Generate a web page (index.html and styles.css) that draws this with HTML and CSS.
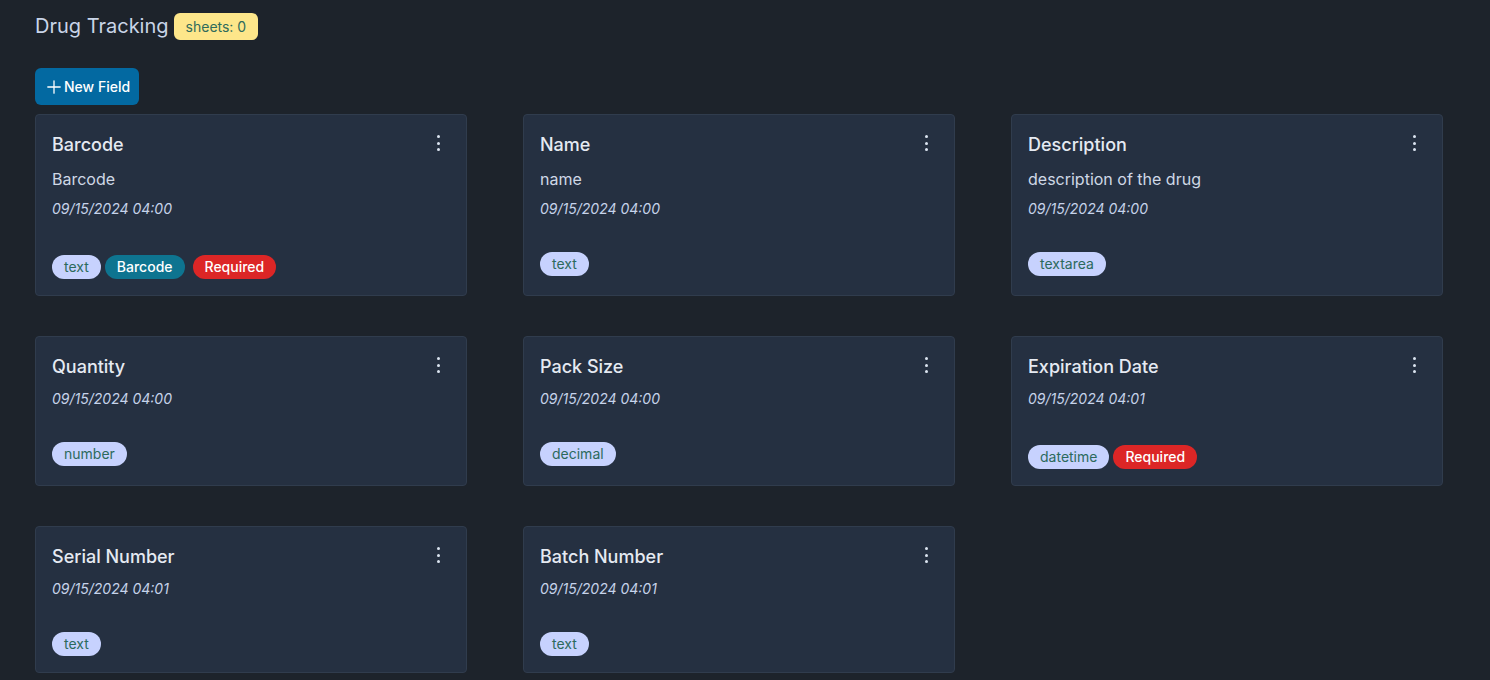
FILE: index.html
```html
<!DOCTYPE html>
<html lang="en">
<head>
<meta charset="utf-8">
<title>Drug Tracking</title>
<link rel="stylesheet" href="styles.css">
</head>
<body>
<main class="page">
  <header class="page-head">
    <h1 class="page-title">Drug Tracking</h1>
    <span class="sheet-count">sheets: 0</span>
  </header>
  <button class="new-btn" type="button">
    <svg class="plus" viewBox="0 0 14 14" width="14" height="14" fill="none" stroke="currentColor" stroke-width="1.3" stroke-linecap="round"><path d="M7 0.8v12.4M0.8 7h12.4"/></svg>
    New Field
  </button>
  <section class="grid">
    <article class="card">
      <div class="card-head"><h2 class="card-title">Barcode</h2><span class="menu"><i></i><i></i><i></i></span></div>
      <p class="desc">Barcode</p>
      <p class="date">09/15/2024 04:00</p>
      <div class="badges req"><span class="badge type">text</span><span class="badge extra">Barcode</span><span class="badge required">Required</span></div>
    </article>
    <article class="card">
      <div class="card-head"><h2 class="card-title">Name</h2><span class="menu"><i></i><i></i><i></i></span></div>
      <p class="desc">name</p>
      <p class="date">09/15/2024 04:00</p>
      <div class="badges"><span class="badge type">text</span></div>
    </article>
    <article class="card">
      <div class="card-head"><h2 class="card-title">Description</h2><span class="menu"><i></i><i></i><i></i></span></div>
      <p class="desc">description of the drug</p>
      <p class="date">09/15/2024 04:00</p>
      <div class="badges"><span class="badge type">textarea</span></div>
    </article>
    <article class="card">
      <div class="card-head"><h2 class="card-title">Quantity</h2><span class="menu"><i></i><i></i><i></i></span></div>
      <p class="date">09/15/2024 04:00</p>
      <div class="badges"><span class="badge type">number</span></div>
    </article>
    <article class="card">
      <div class="card-head"><h2 class="card-title">Pack Size</h2><span class="menu"><i></i><i></i><i></i></span></div>
      <p class="date">09/15/2024 04:00</p>
      <div class="badges"><span class="badge type">decimal</span></div>
    </article>
    <article class="card">
      <div class="card-head"><h2 class="card-title">Expiration Date</h2><span class="menu"><i></i><i></i><i></i></span></div>
      <p class="date">09/15/2024 04:01</p>
      <div class="badges req"><span class="badge type">datetime</span><span class="badge required">Required</span></div>
    </article>
    <article class="card">
      <div class="card-head"><h2 class="card-title">Serial Number</h2><span class="menu"><i></i><i></i><i></i></span></div>
      <p class="date">09/15/2024 04:01</p>
      <div class="badges"><span class="badge type">text</span></div>
    </article>
    <article class="card">
      <div class="card-head"><h2 class="card-title">Batch Number</h2><span class="menu"><i></i><i></i><i></i></span></div>
      <p class="date">09/15/2024 04:01</p>
      <div class="badges"><span class="badge type">text</span></div>
    </article>
  </section>
</main>
</body>
</html>
```

FILE: styles.css
```css
* { box-sizing: border-box; }
html, body { margin: 0; padding: 0; }
body {
  background: #1d232b;
  font-family: Inter, "Noto Sans", "Liberation Sans", sans-serif;
  color: #e2e8f0;
  width: 1490px;
  height: 680px;
  overflow: hidden;
}
.page { padding: 12px 47px 0 35px; }
.page-head { display: flex; align-items: center; gap: 5px; height: 28px; }
.page-title {
  margin: 0;
  font-size: 20px;
  line-height: 28px;
  font-weight: 400;
  color: #c9d5e8;
}
.sheet-count {
  background: #fde68a;
  color: #2f6b5b;
  font-size: 14px;
  line-height: 20px;
  padding: 4px 12px 3px;
  border-radius: 6px;
}
.new-btn {
  margin-top: 28px;
  display: flex;
  align-items: center;
  gap: 3px;
  height: 37px;
  padding: 0 9px 0 12px;
  border: 0;
  border-radius: 6px;
  background: #0369a1;
  color: #ffffff;
  font-family: inherit;
  font-size: 14px;
  font-weight: 500;
}
.plus { width: 14px; height: 14px; flex: none; }
.grid {
  margin-top: 9px;
  display: grid;
  grid-template-columns: repeat(3, 432px);
  column-gap: 56px;
  row-gap: 40px;
}
.card {
  background: #253041;
  border: 1px solid #303c4d;
  border-radius: 4px;
  padding: 16px 16px 16px;
  display: flex;
  flex-direction: column;
}
.card-head { display: flex; align-items: center; justify-content: space-between; height: 28px; }
.card-title {
  margin: 0;
  font-size: 18px;
  line-height: 28px;
  font-weight: 500;
  color: #e5eaf2;
}
.menu {
  width: 24px;
  height: 24px;
  display: flex;
  flex-direction: column;
  align-items: center;
  justify-content: center;
  gap: 3.5px;
  margin-top: -4px;
}
.menu i { display: block; width: 3px; height: 3px; border-radius: 50%; background: #dbe4f0; }
.desc {
  margin: 8px 0 0;
  font-size: 16px;
  line-height: 24px;
  color: #cfd8e6;
}
.date {
  margin: 8px 0 0;
  font-size: 14px;
  line-height: 20px;
  font-style: italic;
  color: #c6d3ea;
}
.badges { margin-top: 33px; display: flex; align-items: center; gap: 4px; }
.badges.req { padding-top: 3px; }
.badge {
  height: 24px;
  line-height: 24px;
  padding: 0 12px;
  border-radius: 12px;
  font-size: 14px;
}
.badge.type { background: #c7d2fe; color: #2c6a5c; }
.badge.extra { background: #0e7490; color: #ffffff; font-weight: 500; margin-right: 4px; }
.badge.required { background: #dc2626; color: #ffffff; font-weight: 500; }
```
